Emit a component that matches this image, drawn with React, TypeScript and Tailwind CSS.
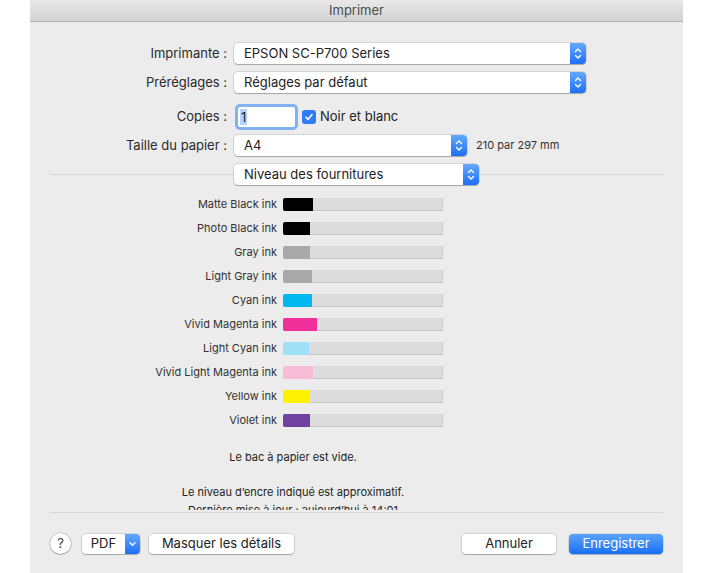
import React from 'react';

interface Ink {
  name: string;
  color: string;
  level: number;
}

const inks: Ink[] = [
  { name: 'Matte Black ink', color: '#000000', level: 30 },
  { name: 'Photo Black ink', color: '#000000', level: 27 },
  { name: 'Gray ink', color: '#a9a9a9', level: 27 },
  { name: 'Light Gray ink', color: '#a9a9a9', level: 29 },
  { name: 'Cyan ink', color: '#00b8f0', level: 29 },
  { name: 'Vivid Magenta ink', color: '#f22e9b', level: 34 },
  { name: 'Light Cyan ink', color: '#9fe0f8', level: 26 },
  { name: 'Vivid Light Magenta ink', color: '#f8bcd6', level: 30 },
  { name: 'Yellow ink', color: '#fff200', level: 27 },
  { name: 'Violet ink', color: '#7041a1', level: 27 },
];

const Stepper = () => (
  <div className="flex w-[16px] items-center justify-center rounded-r-[4px] bg-gradient-to-b from-[#64a8fc] to-[#1b6ef4]">
    <svg width="16" height="21" viewBox="0 0 16 21" fill="none">
      <path d="M5.5 8.5 L8 6 L10.5 8.5" stroke="white" strokeWidth="1.4" strokeLinecap="round" strokeLinejoin="round" />
      <path d="M5.5 12.5 L8 15 L10.5 12.5" stroke="white" strokeWidth="1.4" strokeLinecap="round" strokeLinejoin="round" />
    </svg>
  </div>
);

const Popup: React.FC<{ value: string; className: string }> = ({ value, className }) => (
  <div className={`flex h-[21px] rounded-[4px] bg-white shadow-[0_0_0_0.5px_rgba(0,0,0,0.2),0_1px_1px_rgba(0,0,0,0.22)] ${className}`}>
    <div className="flex-1 pl-[10px] text-[13px] leading-[21px] text-[#222]">{value}</div>
    <Stepper />
  </div>
);

const Label: React.FC<{ text: string }> = ({ text }) => (
  <div className="w-[204px] shrink-0 pr-[7px] text-right text-[13px] text-[#2a2a2a]">{text}</div>
);

const Button: React.FC<{ text: string; className: string }> = ({ text, className }) => (
  <div className={`flex h-[20px] items-center justify-center rounded-[4px] bg-white text-[13px] text-[#222] shadow-[0_0_0_0.5px_rgba(0,0,0,0.22),0_1px_1px_rgba(0,0,0,0.2)] ${className}`}>
    {text}
  </div>
);

export default function App() {
  return (
    <div className="h-[573px] w-[715px] overflow-hidden bg-white" style={{ fontFamily: 'Inter, "Liberation Sans", sans-serif' }}>
      <div className="ml-[30px] flex h-[573px] w-[653px] flex-col bg-[#ececec]">
        {/* Title bar */}
        <div className="flex h-[22px] shrink-0 items-center justify-center border-b border-[#b4b4b4] bg-gradient-to-b from-[#e8e8e8] to-[#d3d3d3] text-[13px] text-[#4d4d4d]">
          Imprimer
        </div>

        {/* Printer */}
        <div className="mt-[21px] flex items-center">
          <Label text="Imprimante :" />
          <Popup value="EPSON SC-P700 Series" className="w-[352px]" />
        </div>

        {/* Presets */}
        <div className="mt-[8px] flex items-center">
          <Label text="Préréglages :" />
          <Popup value="Réglages par défaut" className="w-[352px]" />
        </div>

        {/* Copies */}
        <div className="mt-[13px] flex h-[22px] items-center">
          <Label text="Copies :" />
          <div className="ml-[4px] flex h-[20px] w-[57px] items-center rounded-[2px] bg-white pl-[2px] text-[13px] text-[#222] ring-[3px] ring-[#82b2f4]">
            <span className="bg-[#b3d4fb] px-[1px] leading-[16px]">1</span>
          </div>
          <div className="ml-[7px] flex h-[14px] w-[14px] items-center justify-center rounded-[3px] bg-[#2f7df6]">
            <svg width="10" height="10" viewBox="0 0 10 10" fill="none">
              <path d="M2 5.2 L4.1 7.4 L8 2.6" stroke="white" strokeWidth="1.6" strokeLinecap="round" strokeLinejoin="round" />
            </svg>
          </div>
          <span className="ml-[4px] text-[13px] text-[#222]">Noir et blanc</span>
        </div>

        {/* Paper size */}
        <div className="mt-[7px] flex items-center">
          <Label text="Taille du papier :" />
          <Popup value="A4" className="w-[233px]" />
          <span className="ml-[9px] text-[11px] text-[#333]">210 par 297 mm</span>
        </div>

        {/* Section selector */}
        <div className="mt-[8px] flex items-center pl-[20px] pr-[19px]">
          <div className="h-px w-[184px] bg-[#d6d6d6]" />
          <Popup value="Niveau des fournitures" className="w-[245px]" />
          <div className="h-px flex-1 bg-[#d6d6d6]" />
        </div>

        {/* Supply levels */}
        <div className="h-[325px] shrink-0 overflow-hidden pt-[7px]">
          {inks.map((ink) => (
            <div key={ink.name} className="flex h-[24px] items-center">
              <div className="w-[253px] shrink-0 pr-[6px] text-right text-[11px] text-[#333]">{ink.name}</div>
              <div className="flex h-[13px] w-[160px] overflow-hidden rounded-[2px] bg-[#dcdcdc] shadow-[inset_0_-1px_0_#c6c6c6,inset_-1px_0_0_#cdcdcd]">
                <div className="h-full" style={{ width: ink.level, backgroundColor: ink.color }} />
              </div>
            </div>
          ))}
          <div className="mt-[18px] w-[526px] text-center text-[11px] leading-[14px] text-[#222]">Le bac à papier est vide.</div>
          <div className="mt-[21px] w-[526px] text-center text-[11px] leading-[14px] text-[#222]">Le niveau d’encre indiqué est approximatif.</div>
          <div className="mt-[4px] w-[526px] text-center text-[11px] leading-[14px] text-[#222]">Dernière mise à jour : aujourd’hui à 14:01</div>
        </div>

        <div className="mx-[20px] mt-[2px] h-px bg-[#d6d6d6]" />

        {/* Bottom buttons */}
        <div className="mt-[20px] flex items-center pl-[20px] pr-[20px]">
          <div className="flex h-[21px] w-[21px] items-center justify-center rounded-full bg-white text-[13px] text-[#333] shadow-[0_0_0_0.5px_rgba(0,0,0,0.25),0_1px_1px_rgba(0,0,0,0.2)]">
            ?
          </div>
          <div className="ml-[11px] flex h-[20px] w-[58px] rounded-[4px] bg-white shadow-[0_0_0_0.5px_rgba(0,0,0,0.22),0_1px_1px_rgba(0,0,0,0.2)]">
            <div className="flex flex-1 items-center justify-center text-[13px] text-[#222]">PDF</div>
            <div className="flex w-[15px] items-center justify-center rounded-r-[4px] bg-gradient-to-b from-[#64a8fc] to-[#1b6ef4]">
              <svg width="9" height="6" viewBox="0 0 9 6" fill="none">
                <path d="M2 1.8 L4.5 4.2 L7 1.8" stroke="white" strokeWidth="1.3" strokeLinecap="round" strokeLinejoin="round" />
              </svg>
            </div>
          </div>
          <Button text="Masquer les détails" className="ml-[9px] w-[145px]" />
          <div className="flex-1" />
          <Button text="Annuler" className="w-[94px]" />
          <div className="ml-[13px] flex h-[20px] w-[94px] items-center justify-center rounded-[4px] bg-gradient-to-b from-[#5aa2fb] to-[#176ff5] text-[13px] text-white shadow-[0_0_0_0.5px_rgba(0,0,0,0.15),0_1px_1px_rgba(0,0,0,0.2)]">
            Enregistrer
          </div>
        </div>
      </div>
    </div>
  );
}
